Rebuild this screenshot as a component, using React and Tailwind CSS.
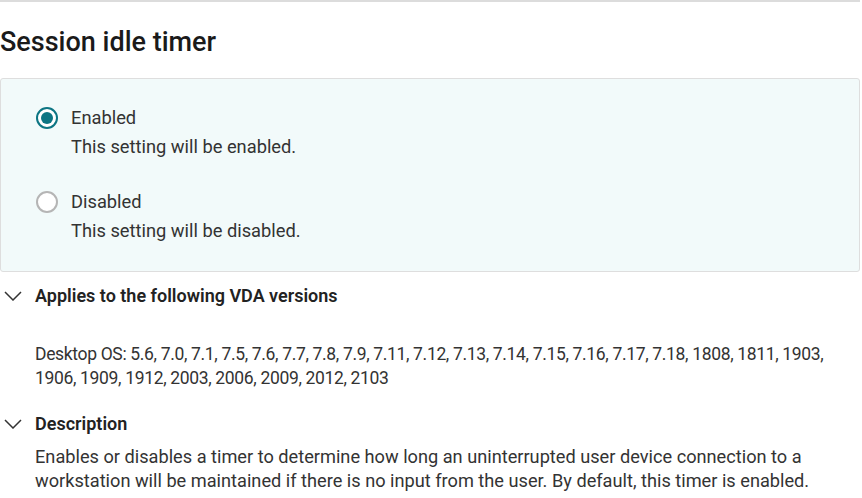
function RadioOption({ checked, label, hint }) {
  return (
    <div className="flex gap-[13px]">
      <span
        className={`mt-[1px] flex h-[22px] w-[22px] shrink-0 items-center justify-center rounded-full border-2 bg-white ${
          checked ? 'border-[#0d7583]' : 'border-[#b5b5b5]'
        }`}
      >
        {checked && <span className="h-[12px] w-[12px] rounded-full bg-[#0d7583]" />}
      </span>
      <div>
        <p className="text-[18.3px] leading-[24px] text-[#333]">{label}</p>
        <p className="mt-[5px] text-[18.3px] leading-[24px] text-[#333]">{hint}</p>
      </div>
    </div>
  );
}

function Chevron() {
  return (
    <svg width="18" height="10" viewBox="0 0 18 10" fill="none" className="shrink-0">
      <polyline points="1,1 9,9 17,1" stroke="#333" strokeWidth="1.5" />
    </svg>
  );
}

function Section({ title, children }) {
  return (
    <section>
      <div className="flex items-center gap-[13px] pl-[4px]">
        <Chevron />
        <h3 className="text-[18px] font-semibold leading-[24px] text-[#222]">{title}</h3>
      </div>
      {children}
    </section>
  );
}

export default function App() {
  return (
    <div className="min-h-[498px] w-[862px] bg-white font-['Roboto',sans-serif]">
      <div className="h-[2px] w-[860px] bg-[#dcdcdc]" />
      <h1 className="mt-[25px] text-[27px] font-medium leading-[30px] text-[#1a1a1a]">Session idle timer</h1>

      <div className="mt-[21px] w-[860px] rounded-[3px] border border-[#dedede] bg-[#f2fafa] pb-[28px] pl-[35px] pt-[27px]">
        <RadioOption checked label="Enabled" hint="This setting will be enabled." />
        <div className="mt-[31px]">
          <RadioOption label="Disabled" hint="This setting will be disabled." />
        </div>
      </div>

      <div className="mt-[12px]">
        <Section title="Applies to the following VDA versions">
          <p className="mt-[34px] w-[850px] pl-[35px] text-[17.5px] leading-[24px] tracking-[-0.34px] text-[#333]">
            Desktop OS: 5.6, 7.0, 7.1, 7.5, 7.6, 7.7, 7.8, 7.9, 7.11, 7.12, 7.13, 7.14, 7.15, 7.16, 7.17, 7.18, 1808, 1811, 1903, 1906, 1909, 1912, 2003, 2006, 2009, 2012, 2103
          </p>
        </Section>
        <div className="mt-[22px]">
          <Section title="Description">
            <p className="mt-[9px] w-[850px] pl-[35px] text-[18.2px] leading-[24px] text-[#333]">
              Enables or disables a timer to determine how long an uninterrupted user device connection to a workstation will be maintained if there is no input from the user. By default, this timer is enabled.
            </p>
          </Section>
        </div>
      </div>
    </div>
  );
}
